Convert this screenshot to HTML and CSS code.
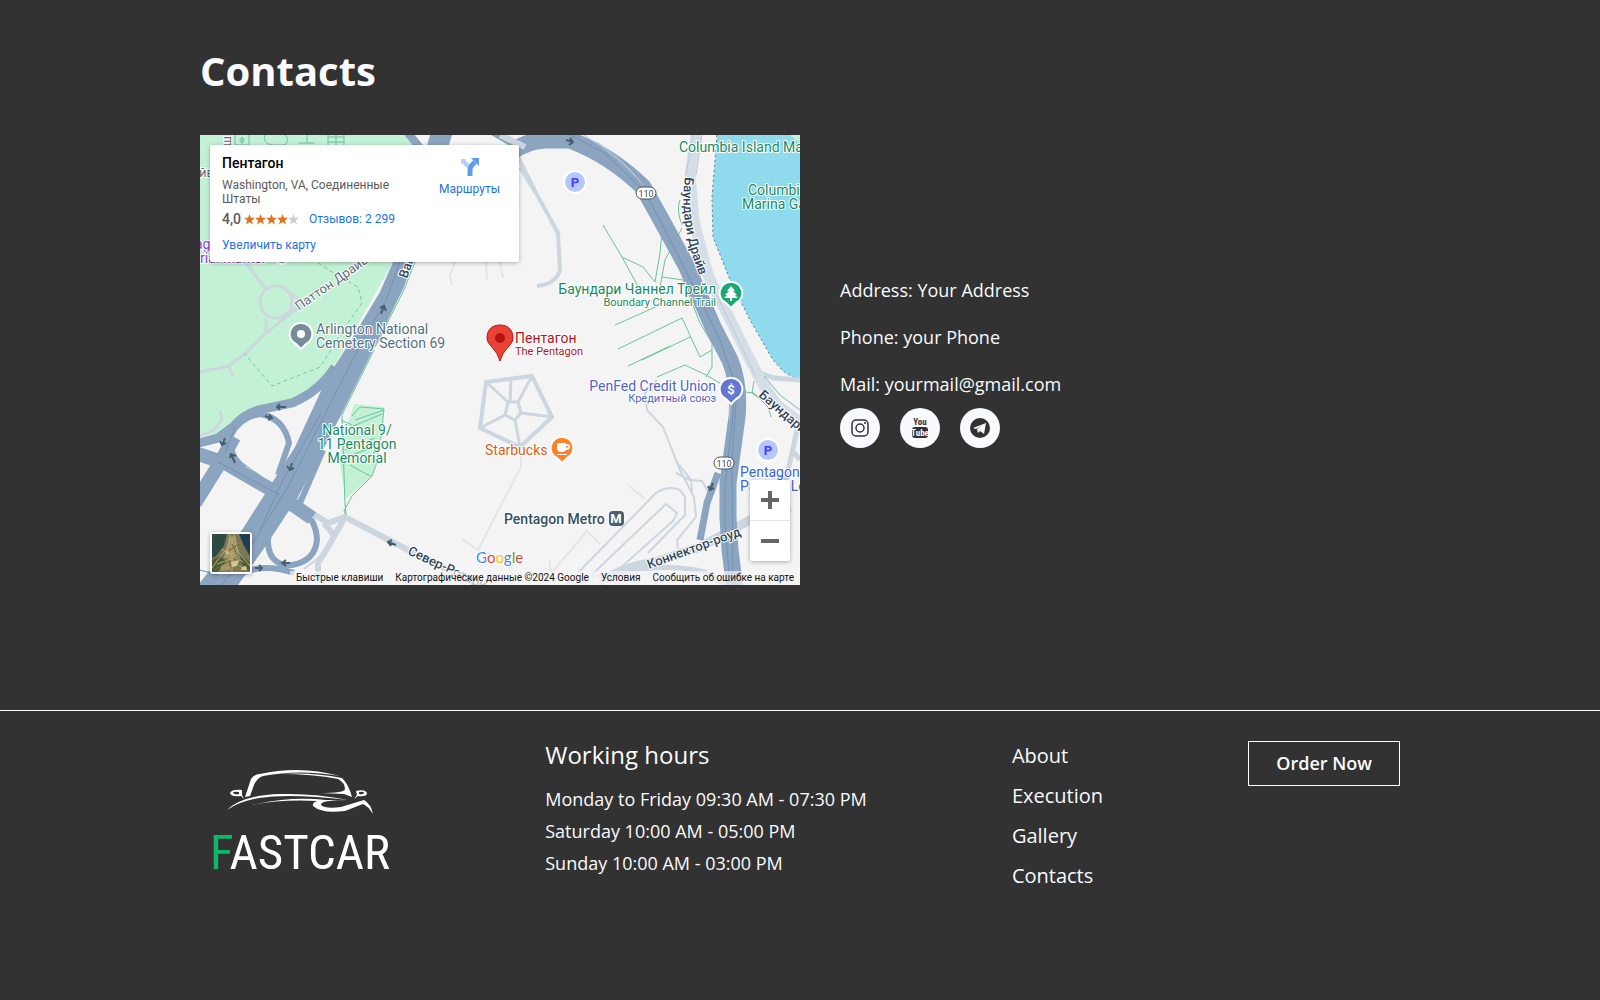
FILE: index.html
```html
<!DOCTYPE html>
<html lang="en">
<head>
<meta charset="utf-8">
<title>FastCar – Contacts</title>
<meta name="viewport" content="width=device-width, initial-scale=1">
<link rel="stylesheet" href="styles.css">
</head>
<body>
<main class="container contacts">
  <h1 class="contacts-title">Contacts</h1>
  <div class="contacts-row">
    <section class="map" lang="ru" aria-label="Пентагон">
      <svg class="map-canvas" viewBox="0 0 600 450" preserveAspectRatio="xMidYMid slice">
        <rect width="600" height="450" fill="#f5f4f5"/>
        <!-- parks and water -->
        <path fill="#c3f1d5" d="M0 0H210L226 26 193 127 143 216 127 243 112 259 92 266 55 272 38 282 18 299 0 302Z"/>
        <path fill="#c3f1d5" d="M154 269 184 272 182 288 177 318 173 340 148 362 145 362 140 328 142 302 150 282Z"/>
        <path fill="#90daee" d="M517 0 512 62 513 102 530 145 550 185 573 225 583 236 600 247V0Z"/>
        <path fill="#c3f1d5" d="M590 0 600 8V0Z"/>
        <path fill="none" stroke="#58798e" stroke-dasharray="2 3" d="M517 0 512 62 513 102 530 145 550 185 573 225 583 236 600 247"/>
        <!-- park paths -->
        <g fill="none" stroke="#cbd8dd" stroke-width="3">
          <circle cx="76" cy="167" r="16"/>
          <path d="M45 127 66 154M91 158 104 168M90 176 104 168 66 198 46 218 28 231 0 237M66 183V198M28 229 33 242M20 276 22 285 15 294 0 301"/>
        </g>
        <g fill="none" stroke="#79c7a0" stroke-dasharray="4 3">
          <path d="M118 128 140 142 158 152 162 168 145 192 120 232 72 251 45 219"/>
        </g>
        <g fill="none" stroke="#6fc29c">
          <path d="M35 0V10H49V0M42 2V10M65 0Q62 8 72 10H85Q90 4 85 0M99 8H115M107 0V8M128 0V10M128 2H144M128 7H144M136 0V10M144 0V10"/>
          <circle cx="42" cy="5" r="2"/>
        </g>
        <!-- minor roads -->
        <g fill="none" stroke="#e3e5e8" stroke-width="2">
          <path d="M255 127 250 140 252 150M286 127 287 144M300 127 303 143M321 315V332L300 372 278 415 262 404M343 448 388 395M386 395 400 409M350 425V450M428 350 445 364M278 415 292 420"/>
        </g>
        <g fill="none" stroke="#ccd6df" stroke-width="3">
          <path stroke-width="4" d="M286 247 332 241 352 282 320 312 280 293Z"/>
          <path d="M308 267 318 267 321 278 315 285 305 280 308 267M286 247 308 267M311 244 310 267M332 241 318 267M352 282 321 278M320 312 315 285M280 293 305 280"/>
          <path stroke-width="2" d="M457 245 445 258 447 275 463 292 480 335 494 362 496 382 477 405 478 414M476 326 491 345 492 358M476 338 490 345 502 346 510 360M366 450 456 358Q468 350 480 355L485 362 485 380 448 418M381 450 466 369 477 378 473 386 417 436 400 450M392 442 450 428"/>
          <path stroke-width="4" d="M320 32 340 65 358 98 360 135Q356 149 337 151M312 10 337 60"/>
        </g>
        <g fill="none" stroke="#ccd6df">
          <path stroke-width="6" d="M102 372 128 388 145 382 208 415 290 455M145 382 128 412 118 428V445M124 388 134 400"/>
          <path stroke-width="2" d="M134 400 122 420 104 434"/>
          <path stroke-width="9" d="M400 446Q430 430 455 427L500 412 550 385 590 372"/>
          <path stroke-width="5" d="M420 437Q470 428 505 437L525 450M600 245 574 243 560 238M597 295 586 345 580 360M592 315 600 325"/>
        </g>
        <g fill="none" stroke="#d5dee6" stroke-width="11">
          <path d="M497-5 490 40 494 86 508 140 545 215 562 248 577 270 600 287"/>
        </g>
        <path fill="none" stroke="#bdcad6" d="M493 0 486 40M502 0 496 40M512 150 555 240"/>
        <!-- trails -->
        <g fill="none" stroke="#68c39a">
          <path d="M367 10 403 25 430 48 450 72 462 97 460 118 455 147M403 90 422 122 443 132 455 147M422 122 440 155M482 93 465 125 460 152M462 142 483 145 487 155 500 188 512 208 512 232 506 242M415 190 460 170M418 214 482 183 500 222 512 215M442 225 490 202M428 231 470 211M457 242 485 230 506 240 530 254M545 257 554 258 568 272 571 282M554 246 552 258 560 264M564 241 580 260 600 275M480 65Q476 75 482 90"/>
          <path d="M174 215 142 280 145 369 146 379M141 285 152 290M215 127 204 155 175 212M152 281 160 272 184 274 181 302 176 330 172 341 152 361 144 376 146 380M155 285 184 275M151 292 182 279M145 315 175 303M147 322 173 312M150 330 170 341M123 318 102 364 92 361M45 330 61 341"/>
        </g>
        <!-- motorways -->
        <g fill="none" stroke="#8ba5c1">
          <path stroke-width="14" d="M-5 368 20 328 34 302M-5 318 25 328 70 354 112 383"/>
          <path stroke-width="9" d="M135 232Q120 256 92 268L58 275Q42 280 33 292L18 303-5 309"/>
          <path stroke-width="6" d="M28 330 31 300Q40 282 60 279 84 283 89 308L78 340M31 300Q28 322 45 333"/>
          <path stroke-width="6" d="M82 372Q67 392 68 408C69 425 79 431 92 430Q115 426 117 405 117 395 111 384M42 438Q65 428 94 438"/>
          <path stroke-width="8" d="M207-3 222 15M320 12 292-4"/>
          <path stroke-width="17" d="M242-5 220 80"/>
          <path stroke-width="6" d="M123 315 100 368"/>
          <path stroke-width="17" d="M312 17Q326 6 345 5L370 5Q410 20 443 52L463 88 487 132 513 192 530 225Q540 250 537 282L528 348V382L530 415 535 455"/>
          <path stroke-width="7" d="M518 338 507 368 500 405"/>
        </g>
        <path fill="#8ba5c1" d="M230 0H252L213 127 204 152 173 215 140 282 123 315 98 362 65 412 38 450H-2L42 395 72 348 95 312 127 243 145 215 180 157 193 127Z"/>
        <path fill="none" stroke="#7391b3" d="M200 127 186 165 155 220 88 352 50 412 22 450M121 278 83 345 60 395M0 435 18 440M370 0 405 18 445 57 470 104 495 154 520 205 535 248 532 290 525 350V390L530 450M537 250 532 330 533 450M18 327 80 360M35 292 25 318"/>
        <path fill="none" stroke="#b4c6d8" d="M384 0Q420 22 443 50M397 7Q422 24 440 46M531 265 529 285"/>
        <path fill="none" stroke="#ccd6df" stroke-width="6" d="M300 0 325 12"/>
        <!-- direction arrows -->
        <g fill="none" stroke="#475d70" stroke-width="2">
          <path d="M86 272H77M80 269 77 272 80 275M65 281 72 283M69 279 72 283 68 285M25 303 22 310M20 306 22 310 26 308M35 328 31 319M30 323 31 319 36 321M92 328 90 335M87 331 90 335 94 333M181 179 184 171M180 173 184 171 186 176M196 410 188 407M192 405 188 407 191 411M90 428H82M86 425 82 428 86 431M55 433H62M59 430 62 433 59 436M366 5 373 7M370 3 373 7 369 10M513 348 510 355M508 351 510 355 514 353"/>
        </g>
        <!-- street names -->
        <g class="street">
          <text transform="translate(99 176) rotate(-35)">Паттон Драйв</text>
          <text x="-8" y="42">айв</text>
          <text transform="translate(31 22) rotate(-90)">шш</text>
        </g>
        <g class="street street-major">
          <text transform="translate(207 144) rotate(-71)">Вашингтон</text>
          <path id="boundary-drive" fill="none" d="M485 42Q477 94 508 160"/>
          <text><textPath href="#boundary-drive">Баундари Драйв</textPath></text>
          <text transform="translate(558 261) rotate(41)">Баундари Драйв</text>
          <text transform="translate(449 434) rotate(-20)">Коннектор-роуд</text>
          <text transform="translate(207 419) rotate(25)">Север-Ротари-роуд</text>
        </g>
        <!-- places -->
        <g class="place park">
          <text x="479" y="17">Columbia Island Marina</text>
          <text x="548" y="60">Columbia</text>
          <text x="542" y="74">Marina Gas</text>
          <text x="516" y="159" text-anchor="end">Баундари Чаннел Трейл</text>
          <text class="sub" x="516" y="171" text-anchor="end">Boundary Channel Trail</text>
          <text x="157" y="300" text-anchor="middle">National 9/</text>
          <text x="157" y="314" text-anchor="middle">11 Pentagon</text>
          <text x="157" y="328" text-anchor="middle">Memorial</text>
        </g>
        <g class="place landmark">
          <text x="-5" y="114">ag</text>
          <text x="0" y="128">rial Marker</text>
        </g>
        <g class="place cemetery">
          <text x="116" y="199">Arlington National</text>
          <text x="116" y="213">Cemetery Section 69</text>
        </g>
        <g class="place selected">
          <text x="315" y="208">Пентагон</text>
          <text class="sub" x="315" y="220">The Pentagon</text>
        </g>
        <g class="place bank">
          <text x="516" y="256" text-anchor="end">PenFed Credit Union</text>
          <text class="sub" x="516" y="267" text-anchor="end">Кредитный союз</text>
        </g>
        <text class="place cafe" x="285" y="320">Starbucks</text>
        <text class="place metro" x="304" y="389">Pentagon Metro</text>
        <g class="place parking">
          <text x="540" y="342">Pentagon</text>
          <text x="540" y="356">Parking Lot</text>
        </g>
        <!-- pins -->
        <g stroke="#fff" stroke-width="2">
          <circle cx="82" cy="122" r="7" fill="#768d99"/>
          <path fill="#768d99" d="M101 188a11 11 0 0 1 5 21l-5 5-5-5a11 11 0 0 1 5-21Z"/>
          <path fill="#19a974" d="M531 147a11 11 0 0 1 5 21l-5 5-5-5a11 11 0 0 1 5-21Z"/>
          <path fill="#6477d3" d="M531 243a11 11 0 0 1 5 21l-5 5-5-5a11 11 0 0 1 5-21Z"/>
          <path fill="#ff8126" d="M362 302a11 11 0 0 1 5 21l-5 5-5-5a11 11 0 0 1 5-21Z"/>
          <circle cx="375" cy="47" r="11" fill="#b4c7ff"/>
          <circle cx="568" cy="315" r="11" fill="#b4c7ff"/>
        </g>
        <rect x="409" y="376" width="15" height="15" rx="4" fill="#4a6174"/>
        <circle cx="101" cy="199" r="4" fill="#fff"/>
        <path fill="#fff" d="M531 151 535 156H533L537 160H535L538 163H532V166H530V163H524L527 160H525L529 156H527Z"/>
        <path fill="#fff" d="M357 308H366V309Q371 309 370 313 369 315 366 315 365 317 363 317H360Q357 316 357 313ZM366 311V313Q368 313 368 311ZM357 319H367V320H357Z"/>
        <path fill="#ea4335" stroke="#b31412" d="M300 226Q298 218 291 211 287 207 287 203C287 194 293 190 300 190S313 194 313 203Q313 207 309 211 302 218 300 226Z"/>
        <circle cx="300" cy="203" r="5" fill="#b31412"/>
        <g class="pin-letter">
          <text x="531" y="259" fill="#fff">$</text>
          <text x="375" y="52" fill="#493cff">P</text>
          <text x="568" y="320" fill="#493cff">P</text>
          <text x="416" y="388" fill="#fff">M</text>
        </g>
        <g class="shield">
          <rect x="436" y="52" width="20" height="12" rx="6"/><text x="446" y="62">110</text>
          <rect x="514" y="322" width="20" height="12" rx="6"/><text x="524" y="332">110</text>
        </g>
        <text class="google" x="276" y="428"><tspan fill="#4285f4">G</tspan><tspan fill="#ea4335">o</tspan><tspan fill="#fbbc04">o</tspan><tspan fill="#4285f4">g</tspan><tspan fill="#34a853">l</tspan><tspan fill="#ea4335">e</tspan></text>
      </svg>

      <div class="place-card">
        <div class="place-info">
          <h2 class="place-name">Пентагон</h2>
          <p class="place-address">Washington, VA, Соединенные Штаты</p>
          <p class="place-rating"><span class="score">4,0</span>
            <svg class="stars" width="55" height="11" viewBox="0 0 55 11" role="img" aria-label="4 из 5">
              <defs><path id="star" d="M5.500 0 6.900 3.800H11L7.800 6.400 9 10.500 5.500 8.100 2 10.500 3.200 6.400 0 3.800H4.100Z"/></defs>
              <g fill="#e7711b"><use href="#star"/><use href="#star" x="11"/><use href="#star" x="22"/><use href="#star" x="33"/></g>
              <use href="#star" x="44" fill="#ccc"/>
            </svg>
            <a href="#reviews">Отзывов: 2&nbsp;299</a></p>
          <a href="#larger">Увеличить карту</a>
        </div>
        <a class="directions" href="#directions">
          <svg width="20" height="20" viewBox="0 0 20 20"><path fill="none" stroke="#b3d1f8" stroke-width="4" d="M2 3 9 10"/><path fill="#b3d1f8" d="M1 2H6L1 7Z"/><path fill="none" stroke="#5f9de9" stroke-width="5" d="M10 19V13Q10 10 12 8L15 5"/><path fill="#5f9de9" d="M11 1H19V9Z"/></svg>
          Маршруты
        </a>
      </div>

      <button class="satellite" type="button" aria-label="Спутник">
        <svg width="38" height="38" viewBox="0 0 38 38">
          <rect width="38" height="38" fill="#7b7854"/>
          <path fill="#2f4a42" d="M0 0H15L12 12 4 22 0 24Z"/><path fill="#203c50" d="M27 0H38V22L32 12Z"/>
          <path fill="#4f5e36" d="M0 26 8 22 14 27 6 38H0ZM28 21 38 28V38L30 31Z"/>
          <path fill="#a89566" d="M17 3 23 2 27 19 20 27 12 23ZM9 31 16 28 19 36 8 37Z"/>
          <path fill="none" stroke="#b3a87a" d="M18 0 17 12 7 24 0 34M22 0 26 18 38 32M12 24Q19 14 28 24M5 30 19 25 33 36M20 3V38M9 15 31 28"/>
          <path fill="none" stroke="#5f6848" d="M15 18 27 10M2 36 14 29M24 34 31 25M20 10 25 21"/>
          <path fill="#dac68d" d="M19 28 27 26 25 32 20 33ZM30 33 34 32 35 36H29ZM13 19 16 16 17 20Z"/>
        </svg>
      </button>
      <div class="zoom">
        <button type="button" aria-label="Увеличить"><svg width="18" height="18" viewBox="0 0 18 18"><path fill="#666" d="M7 0H11V7H18V11H11V18H7V11H0V7H7Z"/></svg></button>
        <button type="button" aria-label="Уменьшить"><svg width="18" height="18" viewBox="0 0 18 18"><path fill="#666" d="M0 7H18V11H0Z"/></svg></button>
      </div>
      <div class="map-legal">
        <button type="button">Быстрые клавиши</button>
        <span>Картографические данные ©2024 Google</span>
        <a href="#terms">Условия</a>
        <a href="#report">Сообщить об ошибке на карте</a>
      </div>
    </section>

    <address class="details">
      <p>Address: Your Address</p>
      <p>Phone: your Phone</p>
      <p>Mail: yourmail@gmail.com</p>
      <div class="social">
        <a href="#instagram" aria-label="Instagram"><svg width="40" height="40" viewBox="0 0 40 40" fill="none" stroke="#323232" stroke-width="1.500"><rect x="12" y="12" width="16" height="16" rx="4"/><circle cx="20" cy="20" r="4"/><circle cx="25" cy="15" r="1" fill="#323232" stroke="none"/></svg></a>
        <a href="#youtube" aria-label="YouTube"><svg class="yt" width="40" height="40" viewBox="0 0 40 40"><rect x="12" y="19" width="16" height="11" rx="3" fill="#323232"/><text x="20" y="17" fill="#323232">You</text><text x="20" y="28" fill="#f9fafd">Tube</text></svg></a>
        <a href="#telegram" aria-label="Telegram"><svg width="40" height="40" viewBox="0 0 40 40"><circle cx="20" cy="20" r="10" fill="#323232"/><path fill="#f9fafd" d="M13 20 26 15 24 26 20 23 18 25 17 21 23 17 16 21Z"/></svg></a>
      </div>
    </address>
  </div>
</main>

<footer class="footer">
  <div class="container footer-row">
    <a class="logo" href="#top" aria-label="FastCar">
      <svg width="200" height="140" viewBox="0 0 200 140">
        <g fill="#fff">
          <path d="M45 42 51 24Q54 19 60 19 100 10 140 21 100 14 63 21 57 23 54 30L50 41Z"/>
          <path d="M82 19Q112 17 142 23 149 30 152 42L144 39 120 38Q145 38 145 34 145 28 138 24 112 19 82 19Z"/>
          <path fill-rule="evenodd" d="M44 44 41 41Q31 42 30 38 32 34 42 35L42 40ZM39 37Q33 36 33 38 35 40 39 39ZM154 44 158 41Q167 42 167 38 165 34 156 36L157 40ZM159 37Q164 36 164 38 163 40 159 39Z"/>
          <path d="M27 55Q42 40 80 39 115 38 148 45 90 38 59 43 40 46 27 55Z"/>
          <path d="M52 50Q90 41 126 45L148 45Q120 45 121 50 125 54 141 52L164 45Q171 49 173 59 168 51 163 49L145 56Q122 59 113 51 112 47 118 46 80 44 52 50Z"/>
        </g>
        <text class="logo-name" x="10" y="114"><tspan fill="#0db866">F</tspan>ASTCAR</text>
      </svg>
    </a>
    <section class="hours">
      <h2>Working hours</h2>
      <p>Monday to Friday 09:30 AM - 07:30 PM</p>
      <p>Saturday 10:00 AM - 05:00 PM</p>
      <p>Sunday 10:00 AM - 03:00 PM</p>
    </section>
    <nav class="footer-nav">
      <a href="#about">About</a>
      <a href="#execution">Execution</a>
      <a href="#gallery">Gallery</a>
      <a href="#contacts">Contacts</a>
    </nav>
    <button class="order" type="button">Order Now</button>
  </div>
</footer>
</body>
</html>
```
FILE: styles.css
```css
* { box-sizing: border-box; }
body {
  margin: 0;
  min-height: 100vh;
  background: #323232;
  color: #f9fafd;
  font: 18px/32px "Open Sans", sans-serif;
}
h1, h2, p { margin: 0; }
a { color: inherit; text-decoration: none; }
button { font: inherit; color: inherit; cursor: pointer; }
svg { display: block; }

.container { max-width: 1200px; margin: 0 auto; }

/* Contacts */
.contacts { padding: 43px 0 125px; }
.contacts-title { font-size: 40px; line-height: 55px; font-weight: 700; margin-bottom: 37px; }
.contacts-row { display: grid; grid-template-columns: 1fr 1fr; column-gap: 40px; align-items: center; margin-right: -40px; }
.details { display: flex; flex-direction: column; gap: 12px; font-style: normal; line-height: 35px; }
.social { display: flex; gap: 20px; margin-top: -6px; }
.social a { border-radius: 50%; background: #f9fafd; }
.yt text { font: 700 9px "Roboto Condensed", "Liberation Sans Narrow", sans-serif; text-anchor: middle; }

/* Map */
.map { position: relative; aspect-ratio: 4 / 3; overflow: hidden; font: 12px/14px Roboto, sans-serif; color: #5b5b5b; }
.map-canvas { width: 100%; height: 100%; }
.map a { color: #1a73e8; }
.map text { paint-order: stroke; }
.place, .street { font-size: 14px; stroke: #fff; stroke-width: 2px; stroke-linejoin: round; }
.street { font-size: 13px; fill: #5f6b75; }
.street path { stroke: none; }
.street-major { font-weight: 500; fill: #33475b; }
.place .sub { font-size: 11px; }
.park { fill: #198a5f; }
.landmark { fill: #8a3fd6; }
.cemetery { fill: #557181; }
.selected { fill: #b3141c; }
.bank { fill: #5265c4; }
.cafe { fill: #d9620d; }
.metro { fill: #344e63; font-weight: 500; }
.parking { fill: #3b62dc; }
.pin-letter { font-size: 13px; font-weight: 700; text-anchor: middle; }
.shield rect { fill: #fff; stroke: #4a5560; }
.shield text { font-size: 9px; fill: #3f4a55; text-anchor: middle; }
.google { font: 15px Lato, sans-serif; stroke: #fff; stroke-width: 2px; }

.place-card {
  position: absolute; top: 10px; left: 10px; width: 309px;
  display: flex; justify-content: space-between;
  padding: 10px 19px 10px 12px;
  background: #fff; border-radius: 2px; box-shadow: 0 1px 4px rgba(0, 0, 0, .3);
}
.place-info { width: 190px; }
.place-name { font-size: 14px; line-height: 16px; font-weight: 500; color: #000; margin-bottom: 7px; }
.place-address { margin-bottom: 5px; width: 170px; }
.place-rating { display: flex; align-items: center; line-height: 17px; margin-bottom: 10px; }
.score { font-size: 14px; font-weight: 500; }
.stars { margin: 0 10px 0 3px; }
.directions { display: flex; flex-direction: column; align-items: center; gap: 5px; padding-top: 2px; }

.satellite { position: absolute; left: 10px; bottom: 11px; padding: 0; border: 2px solid #fff; border-radius: 3px; box-shadow: 0 1px 4px rgba(0, 0, 0, .3); background: #fff; }
.zoom { position: absolute; right: 10px; bottom: 24px; width: 40px; background: #fff; border-radius: 2px; box-shadow: 0 1px 4px rgba(0, 0, 0, .3); }
.zoom button { display: grid; place-items: center; width: 100%; height: 40px; padding: 0; border: 0; background: none; }
.zoom button + button { border-top: 1px solid #e6e6e6; height: 41px; }
.map-legal { position: absolute; right: 0; bottom: 0; display: flex; gap: 12px; padding: 0 6px; font-size: 10px; line-height: 14px; color: #111; background: rgba(245, 245, 245, .7); }
.map-legal a { color: inherit; }
.map-legal button { padding: 0; border: 0; background: none; }

/* Footer */
.footer { border-top: 1px solid #fff; padding: 30px 0; }
.footer-row { display: flex; justify-content: space-between; align-items: flex-start; }
.logo { padding-top: 14px; }
.logo-name { font: 49px "Roboto Condensed", "Liberation Sans Narrow", sans-serif; fill: #fff; }
.hours h2 { font-size: 24px; line-height: 28px; font-weight: 400; margin-bottom: 14px; }
.footer-nav { display: flex; flex-direction: column; gap: 10px; font-size: 20px; line-height: 30px; }
.order { padding: 0 27px; height: 45px; border: 1px solid #fff; background: none; font-weight: 600; line-height: 43px; }
```
